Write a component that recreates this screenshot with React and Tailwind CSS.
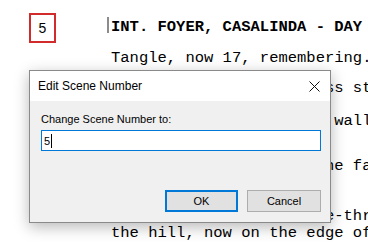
import { useState } from "react";

const mono = { fontFamily: '"Liberation Mono", "Courier New", monospace' };
const ui = { fontFamily: '"Liberation Sans", Arial, sans-serif' };

const ScriptLine = ({ text, className }) => (
    <div className={"pl-[111px] whitespace-pre text-[15.5px] leading-[17px] text-black " + className} style={mono}>
        {text}
    </div>
);

const EditSceneDialog = ({ value, setValue }) => {
    return (
        <div className="absolute left-[29px] top-[70px] w-[302px] h-[153px] border border-[#8a8a8a] bg-[#f0f0f0] shadow-[0_4px_14px_rgba(0,0,0,0.28)] flex flex-col" style={ui}>
            <div className="h-[30px] bg-white flex items-center justify-between pl-[8px] pr-[10px]">
                <span className="text-[12px] text-black">Edit Scene Number</span>
                <svg width="11" height="11" viewBox="0 0 11 11">
                    <path d="M0.5 0.5 L10.5 10.5 M10.5 0.5 L0.5 10.5" stroke="#111" strokeWidth="1" fill="none" />
                </svg>
            </div>
            <div className="flex-1 flex flex-col pl-[11px] pr-[9px]">
                <label className="text-[11px] text-black mt-[11px] leading-[14px]">Change Scene Number to:</label>
                <div className="mt-[4px] h-[21px] border border-[#0078d7] bg-white flex items-center pl-[2px]">
                    <span className="text-[11px] text-black leading-[14px]">{value}</span>
                    <span className="w-[1px] h-[14px] bg-black ml-[1px]"></span>
                </div>
                <div className="flex justify-end gap-[9px] mt-auto mb-[10px]">
                    <button className="w-[73px] h-[22px] border-2 border-[#0078d7] bg-[#e1e1e1] text-[11px] text-black">OK</button>
                    <button className="w-[74px] h-[22px] border border-[#adadad] bg-[#e1e1e1] text-[11px] text-black">Cancel</button>
                </div>
            </div>
        </div>
    );
};

const App = () => {
    const [sceneNumber, setSceneNumber] = useState("5");

    return (
        <div className="relative w-[368px] h-[242px] bg-white overflow-hidden">
            <div className="flex items-start">
                <div className="ml-[29px] mt-[13px] w-[27px] h-[30px] border-2 border-[#d12b2b] flex items-center justify-center text-[14px] text-black" style={ui}>
                    {sceneNumber}
                </div>
                <div className="ml-[51px] mt-[17px] w-[2px] h-[16px] bg-[#8c8c8c]"></div>
                <div className="ml-[2px] mt-[19px] whitespace-pre text-[15.5px] leading-[17px] font-bold text-black" style={mono}>
                    INT. FOYER, CASALINDA - DAY
                </div>
            </div>
            <ScriptLine text="Tangle, now 17, remembering." className="mt-[7px]" />
            <ScriptLine text="She stands near the glass stairs," className="mt-[13px]" />
            <ScriptLine text="Framed photos cover the wall." className="mt-[16px]" />
            <ScriptLine text="She lingers on one of the family photos." className="mt-[28px]" />
            <ScriptLine text="Tangle, six, racing home-through the garden up" className="mt-[33px]" />
            <ScriptLine text="the hill, now on the edge of" className="mt-0" />

            <EditSceneDialog value={sceneNumber} setValue={setSceneNumber} />
        </div>
    );
};

export default App;
